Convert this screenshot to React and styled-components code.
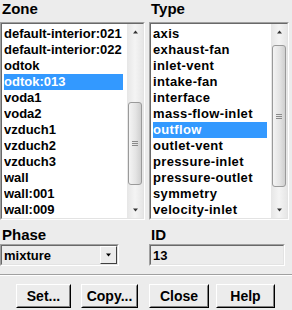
import React from "react";
import styled, { createGlobalStyle } from "styled-components";

const Global = createGlobalStyle`
    body {
        margin: 0;
        background: #ececec;
    }
`

const Panel = styled.div`
    width: 292px;
    height: 310px;
    background: #ececec;
    font-family: "Liberation Sans", Arial, sans-serif;
    font-weight: bold;
    font-size: 13px;
    color: #000;
    overflow: hidden;
    box-sizing: border-box;
`

const Columns = styled.div`
    display: grid;
    grid-template-columns: 145px 140px;
    column-gap: 4px;
`

const Label = styled.div`
    height: ${props => props.h || 22}px;
    line-height: 18px;
    font-size: 15px;
    padding-left: 2px;
`

const Sunken = styled.div`
    box-sizing: border-box;
    border: 1px solid;
    border-color: #a0a0a0 #ffffff #ffffff #a0a0a0;
`

const SunkenInner = styled.div`
    box-sizing: border-box;
    border: 1px solid;
    border-color: #696969 #e3e3e3 #e3e3e3 #696969;
    height: 100%;
`

const ListBody = styled.div`
    display: flex;
    background: #fff;
    height: 100%;
`

const Rows = styled.div`
    flex: 1;
    padding: 2px 2px 0 2px;
    min-width: 0;
    letter-spacing: ${props => props.spacing || 0}px;
`

const Row = styled.div`
    height: 16px;
    line-height: 16px;
    white-space: nowrap;
    overflow: hidden;
    margin-right: 2px;
    background: ${props => props.selected ? "#3399ff" : "transparent"};
    color: ${props => props.selected ? "#fff" : "#000"};
`

const Scroll = styled.div`
    width: 16px;
    display: flex;
    flex-direction: column;
    background: linear-gradient(to right, #e6e6e6, #f4f4f4 50%, #e6e6e6);
`

const ArrowBtn = styled.div`
    height: 16px;
    display: flex;
    align-items: center;
    justify-content: center;
`

const Track = styled.div`
    flex: 1;
    position: relative;
`

const Thumb = styled.div`
    position: absolute;
    left: 1px;
    right: 1px;
    box-sizing: border-box;
    border: 1px solid #9a9a9a;
    border-radius: 3px;
    background: linear-gradient(to right, #f4f4f4, #e4e4e4 55%, #cfcfcf);
    display: flex;
    align-items: center;
    justify-content: center;
`

const Grip = styled.div`
    width: 6px;
    height: 5px;
    background: repeating-linear-gradient(to bottom, #8a8a8a 0 1px, transparent 1px 2px);
`

const Field = styled(Sunken)`
    height: 22px;
    width: ${props => props.w}px;
`

const FieldInner = styled(SunkenInner)`
    display: flex;
    align-items: center;
    padding-left: 2px;
`

const FieldText = styled.div`
    flex: 1;
    font-size: 13px;
`

const DropBtn = styled.div`
    width: 17px;
    height: 100%;
    box-sizing: border-box;
    border: 1px solid;
    border-color: #ffffff #404040 #404040 #ffffff;
    display: flex;
    align-items: center;
    justify-content: center;
    background: #ececec;
`

const Lower = styled.div`
    display: grid;
    grid-template-columns: 149px 140px;
    padding-top: 6px;
`

const Separator = styled.div`
    margin-top: 8px;
    border-top: 1px solid #a0a0a0;
    border-bottom: 1px solid #ffffff;
`

const Buttons = styled.div`
    display: flex;
    padding: 8px 0 0 16px;
`

const Button = styled.div`
    box-sizing: border-box;
    width: ${props => props.w}px;
    margin-right: ${props => props.gap || 0}px;
    height: 24px;
    border: 1px solid;
    border-color: #ffffff #000000 #000000 #ffffff;
    display: flex;
`

const ButtonFace = styled.div`
    flex: 1;
    border: 1px solid;
    border-color: #ececec #808080 #808080 #ececec;
    display: flex;
    align-items: center;
    justify-content: center;
    font-size: 14px;
`

const Triangle = ({ dir = "down", color = "#333", size = 5 }) => (
    <svg width={size + 2} height={4} viewBox={`0 0 ${size + 2} 4`}>
        {dir === "up"
            ? <polygon points={`1,3.5 ${(size + 2) / 2},0.5 ${size + 1},3.5`} fill={color} />
            : <polygon points={`1,0.5 ${(size + 2) / 2},3.5 ${size + 1},0.5`} fill={color} />}
    </svg>
)

function ListBox({ items, selected, thumbTop, thumbHeight, spacing }) {
    return (
        <Sunken style={{ height: 198 }}>
            <SunkenInner>
                <ListBody>
                    <Rows spacing={spacing}>
                        {items.map(item => (
                            <Row key={item} selected={item === selected}>{item}</Row>
                        ))}
                    </Rows>
                    <Scroll>
                        <ArrowBtn><Triangle dir="up" /></ArrowBtn>
                        <Track>
                            <Thumb style={{ top: thumbTop, height: thumbHeight }}>
                                <Grip />
                            </Thumb>
                        </Track>
                        <ArrowBtn><Triangle dir="down" /></ArrowBtn>
                    </Scroll>
                </ListBody>
            </SunkenInner>
        </Sunken>
    )
}

const zones = [
    "default-interior:021", "default-interior:022", "odtok", "odtok:013",
    "voda1", "voda2", "vzduch1", "vzduch2", "vzduch3", "wall", "wall:001", "wall:009"
]

const types = [
    "axis", "exhaust-fan", "inlet-vent", "intake-fan", "interface", "mass-flow-inlet",
    "outflow", "outlet-vent", "pressure-inlet", "pressure-outlet", "symmetry", "velocity-inlet"
]

export default function App() {
    return (
        <Panel>
            <Global />
            <Columns>
                <div>
                    <Label>Zone</Label>
                    <ListBox items={zones} selected="odtok:013" thumbTop={62} thumbHeight={83} />
                </div>
                <div>
                    <Label>Type</Label>
                    <ListBox items={types} selected="outflow" thumbTop={5} thumbHeight={142} spacing={0.35} />
                </div>
            </Columns>
            <Lower>
                <div>
                    <Label h={18}>Phase</Label>
                    <Field w={119}>
                        <FieldInner>
                            <FieldText>mixture</FieldText>
                            <DropBtn><Triangle color="#000" /></DropBtn>
                        </FieldInner>
                    </Field>
                </div>
                <div>
                    <Label h={18}>ID</Label>
                    <Field w={136}>
                        <FieldInner>
                            <FieldText>13</FieldText>
                        </FieldInner>
                    </Field>
                </div>
            </Lower>
            <Separator />
            <Buttons>
                <Button w={55} gap={10}><ButtonFace>Set...</ButtonFace></Button>
                <Button w={57} gap={11}><ButtonFace>Copy...</ButtonFace></Button>
                <Button w={60} gap={7}><ButtonFace>Close</ButtonFace></Button>
                <Button w={59}><ButtonFace>Help</ButtonFace></Button>
            </Buttons>
        </Panel>
    )
}
